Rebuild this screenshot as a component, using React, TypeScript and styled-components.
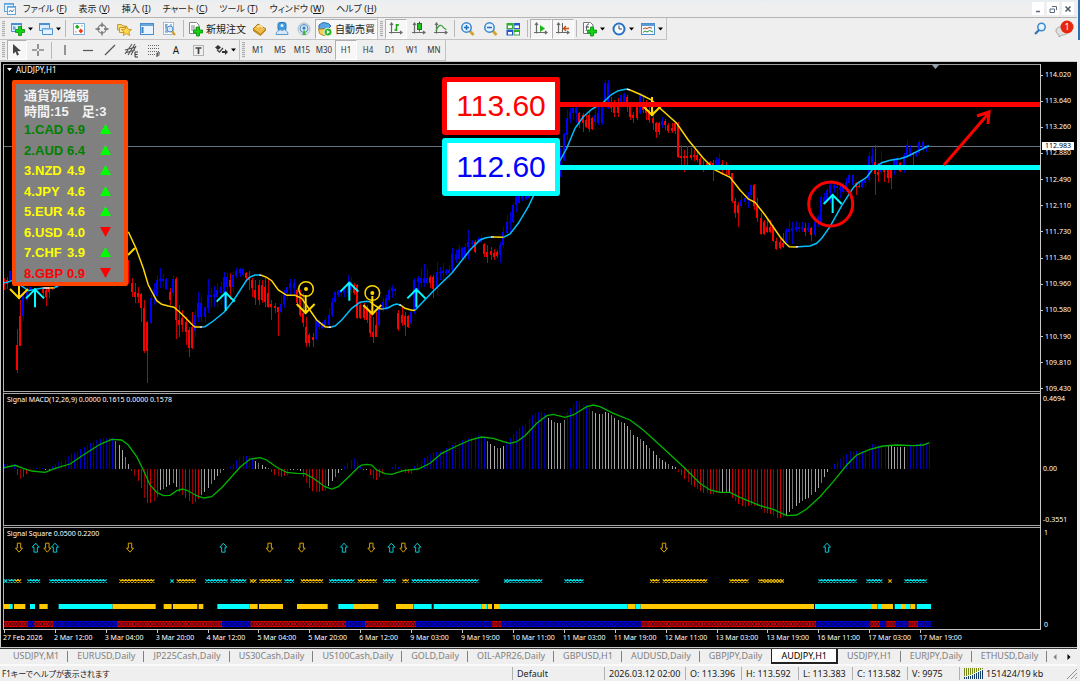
import React from 'react';
import styled, { createGlobalStyle, css } from 'styled-components';

const Global = createGlobalStyle`
  *, *::before, *::after { box-sizing: border-box; }
  body {
    margin: 0;
    background: #efefef;
    color: #1a1a1a;
    font-family: "Noto Sans", "Noto Sans CJK JP", sans-serif;
    font-size: 10px;
    line-height: 12px;
  }
  button, a { font: inherit; color: inherit; text-decoration: none; }
`;

const RED = '#ff0000';
const BLUE = '#0000ff';
const AQUA = '#00ffff';
const GOLD = '#ffd700';

/* ---------- data ---------- */

// Samples are stored in thirds of a pixel. Candles: colour, high, body top, body bottom, low.
const candleRuns: [number, string][] = [
  [12, 'r655 662 675 690;r650 660 672 688;b632 632 660 660'],
  [51, 'r808 855 930 938;r720 768 857 857;b700 705 768 783;b680 690 720 725;b680 682 692 694'],
  [128, 'r680 682 700 715;r680 690 710 738;r680 682 697 714;r680 680 688 690'],
  [385, 'r600 600 670 672;r655 670 697 712;r668 697 712 728;r680 700 712 730;r700 703 743 785;r720 743 873 880;r783 785 873 970;b705 714 790 792;b670 690 710 735;b645 660 707 715;b625 657 662 685;b643 657 662 680;b655 657 688 690;r685 695 720 735;b645 657 700 707;r650 657 780 838;r735 780 795 830;r750 775 795 815;r770 785 815 855;r800 810 865 890;r755 800 865 868;b750 765 812 830;b697 730 770 785;b712 730 772 785;b740 742 772 790;b658 705 745 760;b685 705 712 740;b678 703 712 742;b670 690 710 740;b665 682 700 735;b635 650 700 745;b640 650 680 700;r640 660 680 720;b635 645 680 700;b625 632 648 655;b625 628 640 650;b625 628 645 650;r635 640 655 665;r632 650 660 690;r655 660 685 710;r660 690 715 735;r660 675 720 735;r660 675 720 730;r655 682 725 740;r655 700 740 745'],
  [814, 'r720 733 740 780;r730 738 745 760;r740 742 757 827;b705 733 757 762;b690 702 733 745;b680 682 700 720;b657 668 685 705;b657 668 685 705;r685 690 730 740;r690 700 765 770;r700 760 790 800;r770 800 850 860;r820 825 850 860;r820 830 840 860;b775 780 838 840;b780 785 800 810;b785 790 805 808;b770 780 800 805;b745 765 795 800;b715 725 765 770;b694 697 725 730;b690 693 706 710;b690 693 700 710;b685 690 700 710;b645 665 700 710;b650 665 690 700;r670 675 700 705;r672 675 775 778;r730 735 775 778;r730 735 775 780;r735 740 780 790;r750 755 820 830;r770 815 832 850;r755 795 830 832;b735 745 795 800;b715 725 750 755;b705 715 748 750;b680 690 720 725;b675 685 692 715;b683 687 692 705;r750 760 808 812;r740 765 790 798;r755 768 795 827;r765 768 800 805;b750 755 790 795;b655 660 755 762;b648 655 665 700;b625 653 670 680;b612 653 670 680;b628 655 670 675;r645 650 670 685;r645 650 688 715;b605 637 680 705;b620 635 640 660;b608 633 640 660;b628 633 640 645;b615 630 640 660;b563 583 630 640;b570 583 600 610;b555 567 597 605;b560 565 595 600;b550 560 590 600;b510 547 560 600;b540 547 553 560;r540 545 575 580;b530 537 545 550;b525 535 545 550;r548 553 583 590;r555 575 590 610;r560 572 585 600;r567 580 590 600;r570 575 587 595;b545 555 585 610;b500 515 555 565;b465 487 520 535;b455 485 490 515;b428 435 487 490;b405 410 435 455;b400 405 430 432;b395 400 418 422;b390 400 418 420;b380 390 415 418'],
  [1681, 'b265 270 350 350;b218 222 300 302;b150 175 225 240;b145 155 178 190;b140 143 160 180;b140 143 160 190;r155 160 185 205;r160 165 190 215;r165 180 200 205;r150 165 208 215;r170 175 208 210;b150 165 185 195;b140 160 190 195;b130 140 190 195;b60 68 140 145;b60 68 145 148;r110 125 145 155;r120 140 158 170;r115 140 160 172;b102 105 140 145;b100 103 125 130;r105 110 140 155;r130 140 170 180;r155 165 175 188;r130 140 175 180;b103 105 160 162;r110 125 150 160;r120 130 160 180;r140 150 180 190;r150 175 190 210;r185 190 215 235;r185 190 215 225;b172 182 195 205;r178 183 195 210;r190 195 212 218;r190 205 213 220;r185 190 213 223;r185 195 292 295;r255 288 293 315;r270 287 293 335;r258 287 293 320;r265 285 293 300;r270 285 290 302;r275 285 300 305;r290 298 315 320;r300 315 325 335;r305 310 320 325;r302 305 325 330;r300 310 330 362;b290 300 315 320;b280 298 315 320;r300 312 330 345;r305 315 330 345;r315 325 345 350;r338 340 422 430;r415 422 460 475;r425 435 460 500;b405 420 437 445;b405 415 425 435;b395 405 420 445;b372 375 405 415;r372 375 437 450;r415 437 475 485;r460 475 522 525;r480 485 522 525;r475 500 515 520;r480 500 515 520;r495 500 542 545;r535 542 568 570;r535 545 565 568;r520 550 560 565;b505 510 550 552;b480 508 515 540;b485 503 513 553;b483 500 510 515;b490 500 508 515;b485 500 508 515;r490 505 515 528;b490 505 510 515'],
  [2434, 'r500 505 525 542;b480 485 525 530;b465 470 490 500;b405 410 485 490;b400 410 425 430;b385 390 420 425;b370 375 400 430;b370 375 385 400;b360 378 385 410;b375 380 390 415;b370 380 395 400;b355 365 385 395;b340 345 370 375;b343 345 375 385;r365 370 380 405;r365 378 382 385;b360 365 380 385;b350 360 370 380;b275 288 360 365;b265 288 310 330;r255 305 342 405;r310 335 345 365;b272 310 335 345;r320 325 335 365;r325 330 355 370;r325 330 355 387;b295 300 330 345;b288 295 320 325;r305 310 332 335;b280 285 330 340;b240 255 290 295;b255 265 285 290;r275 278 285 315;b275 280 288 290;b240 245 280 285;b240 245 270 275;b255 260 265 275'],
];

const averageRuns: [string, string][] = [
  ['#00bfff', '12,668 22,667 40,660 85,692 110,687 130,684'],
  ['#fff', '130,684 148,684'],
  [GOLD, '148,684 165,683'],
  ['#00bfff', '160,684 175,678'],
  [GOLD, '385,515 408,565 430,625 445,675 470,722 485,733 505,738 522,742 545,762 575,793 585,801 600,801'],
  ['#00bfff', '607,801 615,800 640,783 672,757 700,722 740,660 752,650 765,645 778,645'],
  [GOLD, '784,646 800,652 815,662 835,690 860,706 885,706 905,715 925,743 950,780 975,800 985,802'],
  ['#00bfff', '994,801 1005,798 1025,780 1055,745 1080,727 1100,724 1110,725'],
  [GOLD, '1110,725 1120,733 1140,746 1148,747'],
  ['#00bfff', '1148,747 1165,743 1180,735 1190,732 1198,734'],
  [GOLD, '1203,736 1215,745 1235,751 1245,751'],
  ['#00bfff', '1245,751 1300,693 1355,640 1410,570 1440,540 1455,534 1472,531'],
  [GOLD, '1482,531 1510,532'],
  ['#00bfff', '1510,532 1530,522 1555,490 1585,440 1602,404 1640,345 1681,300 1700,265 1725,205 1750,170 1775,148 1810,127 1835,103 1855,92 1880,87'],
  [GOLD, '1890,90 1920,103 1955,120 1980,145 2030,190 2065,240 2110,295 2145,330 2190,352 2220,390 2245,417 2265,427 2295,465 2340,530 2355,548 2368,560 2386,561'],
  ['#00bfff', '2395,560 2430,558 2450,550 2465,535 2490,500 2525,437 2560,383 2575,368 2600,352 2620,325 2645,308 2670,301 2700,296 2720,290 2750,275 2770,265 2787,257'],
];

const averageTurns = '600,801 607,801;778,645 784,646;985,802 994,801;1198,734 1203,736;1472,531 1482,531;1880,87 1890,90;2386,561 2395,560';

// MACD histogram: colour and its outline as x:value anchors.
const macdRuns: [string, string][] = [
  ['b', '12:222 40:219 46:228'],
  ['r', '50:255 60:267 72:260 82:250 90:240'],
  ['b', '100:235 120:231 130:235'],
  ['g', '135:237 145:240'],
  ['b', '155:228 175:215 195:210 205:197 235:182 260:165 280:155 300:146 338:143'],
  ['g', '345:152 360:170 380:210 387:228'],
  ['r', '393:242 405:262 415:275 425:300 433:328 445:342 460:333 472:318'],
  ['g', '478:302 500:290 517:278 530:293'],
  ['r', '536:305 550:318 575:342 590:333 599:320'],
  ['g', '604:315 625:292 650:258 672:240'],
  ['b', '680:233 700:220 712:205 725:198 748:197 760:208'],
  ['g', '766:213 780:222 800:235'],
  ['r', '805:240 820:252 838:262 858:255'],
  ['g', '865:238 903:243'],
  ['r', '908:260 925:292 940:307 979:302'],
  ['g', '984:290 1000:265 1015:247 1028:238'],
  ['b', '1033:228 1050:210 1062:205 1083:230'],
  ['g', '1090:236 1098:238'],
  ['r', '1105:250 1120:268 1130:270 1142:258 1152:245'],
  ['b', '1174:231 1185:222 1198:234'],
  ['r', '1207:246 1230:252 1238:250'],
  ['b', '1243:228 1255:215 1275:200 1295:190 1330:178 1350:168 1375:152 1410:142 1435:136 1449:143'],
  ['g', '1453:148 1470:160 1490:175 1505:172 1514:165'],
  ['b', '1519:155 1550:120 1570:105 1595:75 1620:62 1638:72'],
  ['g', '1641:82 1655:92 1675:102 1685:95 1695:85'],
  ['b', '1699:68 1720:40 1730:33 1750:42 1765:50'],
  ['g', '1767:55 1785:68 1800:75 1815:65 1830:72 1850:90 1870:98 1885:110 1900:135 1930:155 1960:185 1970:200 1985:210 2005:222 2028:234'],
  ['r', '2034:245 2050:262 2065:280 2085:292 2110:308 2140:312 2162:308'],
  ['g', '2164:305 2190:305'],
  ['r', '2193:320 2215:343 2235:352 2250:343 2275:350 2290:368 2310:372 2325:383 2340:385 2352:380'],
  ['g', '2357:375 2375:358 2395:340 2430:320 2450:300 2465:275 2484:242'],
  ['b', '2489:233 2505:220 2520:205 2550:183 2590:183 2605:168 2615:163 2658:165'],
  ['g', '2661:168 2712:172'],
  ['b', '2715:168 2760:160 2790:160'],
];

const macdSignal =
  '12,233 45,226 70,235 95,243 135,247 165,235 210,222 250,195 300,163 335,148 365,150 385,165 410,200 430,240 450,285 470,307 490,317 510,316 530,302 548,297 565,303 590,317 612,324 635,320 665,293 720,232 750,207 780,203 800,210 830,232 860,247 890,250 915,251 940,265 975,290 995,297 1015,290 1045,262 1075,232 1085,225 1100,223 1115,225 1130,240 1155,251 1175,253 1210,242 1255,237 1290,220 1325,190 1370,168 1410,150 1445,141 1480,145 1510,155 1530,160 1550,155 1575,137 1610,100 1640,77 1660,73 1695,82 1720,75 1760,50 1780,45 1800,50 1840,70 1890,90 1930,120 1990,175 2050,230 2100,280 2130,300 2160,307 2190,307 2220,322 2280,347 2320,358 2360,377 2390,375 2420,357 2460,320 2500,275 2540,225 2570,195 2610,178 2650,168 2690,165 2740,167 2770,165 2788,158';

const crossRuns: [string, number, number][] = [
  ['a', 12, 16], ['a', 25, 42], ['y', 44, 64], ['a', 82, 120], ['a', 148, 320], ['y', 358, 465], ['a', 511, 520],
  ['y', 530, 588], ['a', 616, 683], ['a', 691, 740], ['y', 750, 770], ['y', 778, 846], ['a', 853, 884], ['y', 902, 970],
  ['a', 987, 1065], ['y', 1073, 1132], ['a', 1149, 1188], ['y', 1207, 1227], ['a', 1235, 1437], ['a', 1512, 1628],
  ['a', 1693, 1752], ['y', 1950, 1980], ['y', 1988, 2124], ['y', 2188, 2247], ['y', 2275, 2352], ['a', 2455, 2571],
  ['a', 2599, 2647], ['y', 2665, 2676], ['a', 2713, 2780],
];

const bandRuns: [string, number, number][] = [
  ['y', 12, 30], ['a', 30, 38], ['y', 42, 76], ['a', 90, 105], ['y', 118, 143], ['a', 176, 338], ['y', 338, 467],
  ['y', 491, 515], ['y', 519, 592], ['y', 596, 610], ['a', 652, 748], ['y', 748, 773], ['y', 777, 849], ['y', 891, 983],
  ['a', 1015, 1062], ['y', 1062, 1135], ['y', 1188, 1240], ['a', 1241, 1295], ['a', 1301, 1444], ['y', 1444, 1458],
  ['a', 1458, 1463], ['y', 1464, 1476], ['y', 1482, 1497], ['a', 1497, 1883], ['y', 1883, 1907], ['a', 1908, 1922],
  ['y', 1922, 2442], ['a', 2445, 2616], ['y', 2616, 2631], ['a', 2632, 2646], ['y', 2646, 2679], ['a', 2684, 2703],
  ['y', 2703, 2718], ['a', 2718, 2731], ['y', 2731, 2746], ['a', 2750, 2793],
];

const trendReds: [number, number][] = [
  [10, 80], [106, 158], [354, 663], [754, 1035], [1098, 1244], [1479, 1503], [1928, 2448], [2613, 2637], [2661, 2685], [2728, 2752],
];

const strengths = [
  ['1.', 'CAD', '6.9', '#008000', 'up'],
  ['2.', 'AUD', '6.4', '#008000', 'up'],
  ['3.', 'NZD', '4.9', '#ffff00', 'up'],
  ['4.', 'JPY', '4.6', '#ffff00', 'up'],
  ['5.', 'EUR', '4.6', '#ffff00', 'up'],
  ['6.', 'USD', '4.0', '#ffff00', 'down'],
  ['7.', 'CHF', '3.9', '#ffff00', 'up'],
  ['8.', 'GBP', '0.9', '#ff0000', 'down'],
];

const prices = ['114.020', '113.640', '113.260', '112.880', '112.490', '112.110', '111.730', '111.340', '110.960', '110.580', '110.190', '109.810', '109.430'];

const times = [
  '27 Feb 2026', '2 Mar 12:00', '3 Mar 04:00', '3 Mar 20:00', '4 Mar 12:00', '5 Mar 04:00', '5 Mar 20:00', '6 Mar 12:00',
  '9 Mar 03:00', '9 Mar 19:00', '10 Mar 11:00', '11 Mar 03:00', '11 Mar 19:00', '12 Mar 11:00', '13 Mar 03:00', '13 Mar 19:00',
  '16 Mar 11:00', '17 Mar 03:00', '17 Mar 19:00',
];

const charts = [
  'USDJPY,M1', 'EURUSD,Daily', 'JP225Cash,Daily', 'US30Cash,Daily', 'US100Cash,Daily', 'GOLD,Daily', 'OIL-APR26,Daily',
  'GBPUSD,H1', 'AUDUSD,Daily', 'GBPJPY,Daily', 'AUDJPY,H1', 'USDJPY,H1', 'EURJPY,Daily', 'ETHUSD,Daily',
];

const menus = [['ファイル', 'F'], ['表示', 'V'], ['挿入', 'I'], ['チャート', 'C'], ['ツール', 'T'], ['ウィンドウ', 'W'], ['ヘルプ', 'H']];

/* ---------- layout ---------- */

const Shell = styled.div`
  display: flex;
  flex-direction: column;
  min-height: 100vh;
  padding-right: 3px;
  overflow: hidden;
  background: linear-gradient(#2f6fb5, #2f6fb5) right top / 2px 40px no-repeat, #efefef;
`;

const MenuBar = styled.header`
  display: flex;
  align-items: center;
  height: 18px;
  padding: 0 3px;
  border-bottom: 1px solid #b4b4b4;
  background: linear-gradient(#e8eef4, #efefef 3px);
`;

const MenuNav = styled.nav`
  display: flex;
  flex: 1;
  gap: 12px;
  margin-left: 6px;
`;

const MenuButton = styled.button`
  padding: 0;
  border: 0;
  background: none;
  font-size: 9px;
  font-feature-settings: "palt";
  white-space: nowrap;
`;

const Underlined = styled.span`
  text-decoration: underline;
`;

const WindowControls = styled.div`
  display: flex;
  gap: 3px;
`;

const WindowButton = styled.button`
  display: grid;
  place-items: center;
  width: 12px;
  height: 13px;
  padding: 0;
  border: 0;
  background: #fff;
`;

const ToolRow = styled.div`
  display: flex;
  align-items: stretch;
  height: 22px;
  & + & { height: 21px; }
`;

const ToolBar = styled.div`
  display: flex;
  align-items: center;
  padding-left: 2px;
  border: solid #c2c2c2;
  border-width: 0 1px 1px 0;
`;

const Grip = styled.span`
  width: 3px;
  height: 16px;
  margin: 0 2px 0 0;
  background: repeating-linear-gradient(#b0b0b0 0 1px, #e4e4e4 1px 2px);
`;

const Divider = styled.span<{ $before?: number }>`
  width: 1px;
  height: 17px;
  margin: 0 2px 0 ${(p) => p.$before ?? 2}px;
  background: #b8b8b8;
`;

const Tool = styled.button<{ $width?: number; $pressed?: boolean; $small?: boolean }>`
  display: flex;
  align-items: center;
  justify-content: center;
  gap: 2px;
  width: ${(p) => p.$width ?? 22}px;
  height: 20px;
  padding: 0;
  border: 1px solid transparent;
  background: none;
  white-space: nowrap;
  flex: none;
  ${(p) => p.$small && css`font-size: 8px; color: #333;`}
  ${(p) => p.$pressed && css`border-color: #b0b0b0 #fff #fff #b0b0b0; background: #f7f7f7;`}
`;

const Spacer = styled.div`
  flex: 1;
`;

const Corner = styled.div`
  display: flex;
  align-items: center;
  gap: 7px;
  padding-right: 3px;
`;

const IconButton = styled.button`
  display: flex;
  padding: 0;
  border: 0;
  background: none;
`;

const ChartFrame = styled.main`
  display: flex;
  flex: 1;
  flex-direction: column;
  border: solid #c9c9c9;
  border-width: 1px 0 1px 1px;
`;

const ChartWindow = styled.section`
  position: relative;
  display: flex;
  flex: 1;
  flex-direction: column;
  padding: 2px 0 0 2px;
  background: #000;
  color: #fff;
  font-size: 8px;
  line-height: 10px;
`;

const Pane = styled.div<{ $height: number; $grow?: boolean }>`
  display: flex;
  flex: ${(p) => (p.$grow ? 1 : 0)} 0 ${(p) => p.$height}px;
`;

const Plot = styled.div<{ $top?: boolean; $last?: boolean }>`
  position: relative;
  flex: 1;
  min-width: 0;
  overflow: hidden;
  border-left: 1px solid #b4b4b4;
  border-top: ${(p) => (p.$top ? '1px solid #a0a0a0' : '0')};
  border-bottom: ${(p) => (p.$last ? '1px solid #c8c8c8' : '3px double #a8a8a8')};
`;

const Drawing = styled.svg`
  position: absolute;
  inset: 0;
  width: 100%;
  height: 100%;
`;

const PaneTitle = styled.h2<{ $fine?: boolean }>`
  position: absolute;
  top: ${(p) => (p.$fine ? 1 : 0)}px;
  left: 3px;
  display: flex;
  align-items: center;
  gap: 4px;
  margin: 0;
  font-size: ${(p) => (p.$fine ? 7 : 8)}px;
  font-weight: 400;
`;

const Scale = styled.ol`
  position: relative;
  display: flex;
  flex-direction: column;
  justify-content: space-between;
  width: 37px;
  margin: 0;
  padding: 0;
  border-left: 1px solid #c8c8c8;
  list-style: none;
  font-size: 7px;
`;

const PriceScale = styled(Scale)`
  padding-top: 6px;
  li { display: flex; align-items: center; gap: 2px; }
  li::before { content: ""; width: 2px; height: 1px; background: #c8c8c8; }
`;

const MacdScale = styled(Scale)`
  display: grid;
  grid-template-rows: 70px 51px auto;
  padding-left: 2px;
`;

const SquareScale = styled(Scale)`
  padding-left: 3px;
`;

const PriceTag = styled.output`
  position: absolute;
  top: 78px;
  left: 1px;
  width: 32px;
  padding-left: 3px;
  background: #fff;
  color: #000;
  line-height: 8px;
`;

const TimeAxis = styled.ol`
  display: grid;
  grid-template-columns: repeat(19, 1fr);
  width: 967px;
  height: 17px;
  margin: 0;
  padding: 0;
  list-style: none;
  white-space: nowrap;
  font-size: 7px;
  li::before { content: ""; display: block; width: 1px; height: 3px; margin-left: 1px; background: #c8c8c8; }
`;

const StrengthPanel = styled.aside`
  position: absolute;
  top: 15px;
  left: 8px;
  width: 116px;
  height: 206px;
  padding: 4px 9px 0 8px;
  border: 4px solid #ff4500;
  border-radius: 2px;
  background: #808080;
  font-family: "Liberation Sans", "Noto Sans CJK JP", sans-serif;
  font-weight: 700;
  font-size: 13px;
  line-height: 16px;
`;

const StrengthHead = styled.p`
  display: flex;
  gap: 13px;
  margin: 0;
  color: #f2f2f2;
  white-space: nowrap;
`;

const StrengthTable = styled.table`
  width: 100%;
  height: 164px;
  border-collapse: collapse;
  td { padding: 0; }
`;

const StrengthRow = styled.tr<{ $tone: string }>`
  color: ${(p) => p.$tone};
  td:first-child { width: 11px; }
  td:nth-child(2) { width: 32px; }
  td:nth-child(3) { width: 33px; }
`;

const LevelTag = styled.strong<{ $line: string; $ink: string; $top: number }>`
  position: absolute;
  top: ${(p) => p.$top}px;
  left: 438px;
  display: grid;
  place-items: center;
  width: 118px;
  height: 58px;
  border: 5px solid ${(p) => p.$line};
  border-radius: 3px;
  background: #fff;
  color: ${(p) => p.$ink};
  font-family: "Liberation Sans", sans-serif;
  font-size: 30px;
  font-weight: 400;
  line-height: 40px;
`;

const TabStrip = styled.nav`
  display: flex;
  align-items: stretch;
  height: 16px;
  padding-left: 4px;
  border-top: 1px solid #333;
  overflow: hidden;
  font-size: 9px;
`;

const Tab = styled.a<{ $active?: boolean; $divided?: boolean }>`
  position: relative;
  flex: none;
  padding: 1px 9px;
  color: #808080;
  white-space: nowrap;
  ${(p) => p.$divided && css`
    &::after { content: ""; position: absolute; top: 2px; right: 0; width: 1px; height: 11px; background: #808080; }
  `}
  ${(p) => p.$active && css`
    border: solid #222;
    border-width: 0 2px 2px 1px;
    background: #fff;
    color: #000;
  `}
`;

const TabArrows = styled.div`
  display: flex;
  gap: 10px;
  align-items: center;
  margin-left: auto;
  padding-right: 6px;
`;

const StatusBar = styled.footer`
  display: grid;
  grid-template-columns: minmax(0, 1fr) 92px 81px 56px 57px 54px 55px 52px 118px;
  align-items: center;
  height: 17px;
  border-top: 2px solid #fafafa;
  white-space: nowrap;
  font-size: 9px;
`;

const StatusCell = styled.span<{ $plain?: boolean }>`
  display: flex;
  align-items: center;
  gap: 3px;
  height: 13px;
  padding-left: ${(p) => (p.$plain ? 2 : 4)}px;
  border-left: ${(p) => (p.$plain ? 0 : 1)}px solid #b0b0b0;
`;

const StatusHelp = styled(StatusCell)`
  font-size: 8px;
  font-feature-settings: "palt";
`;

const ResizeGrip = styled.span`
  display: flex;
  margin-left: auto;
`;

/* ---------- icons ---------- */

const Svg = ({ children, w = 16, h = 16 }: { children: React.ReactNode; w?: number; h?: number }) => (
  <svg width={w} height={h} viewBox={`0 0 ${w} ${h}`} fill="none" aria-hidden="true">{children}</svg>
);
const Caret = () => <Svg w={5} h={4}><path d="M0 0.5h5L2.5 3.5z" fill="#000" /></Svg>;
const plusPath = 'M9.5 7h3v3h3v3h-3v3h-3v-3h-3v-3h3z';
const Plus = () => <path d={plusPath} fill="#14d214" stroke="#088a08" strokeWidth="0.8" />;

const NewChart = () => (
  <Svg><path d="M1.5 2.5h10v8h-10z" fill="#dcecff" stroke="#4a90d0" /><path d="M1 3h11" stroke="#4a90d0" strokeWidth="2" /><path d="M3 7h3M4 5v4" stroke="#4a90d0" /><g transform="translate(-1 -1.5)"><Plus /></g></Svg>
);
const Profiles = () => (
  <Svg><path d="M1.5 2.5h10v7h-10z" fill="#dcecff" stroke="#4a90d0" /><path d="M1 3h11" stroke="#4a90d0" strokeWidth="2" /><path d="M4.5 7.500h10v6h-10z" fill="#e6f2ff" stroke="#4a90d0" /><path d="M4 8h11" stroke="#7fb4e4" strokeWidth="1.5" /></Svg>
);
const MarketWatch = () => (
  <Svg><rect x="2.500" y="2.500" width="11" height="11" fill="#fff" stroke="#7fb0dc" /><path d="M4 6l2-2.500L8.500 6 6.500 8z" fill="#12b212" /><path d="M7.500 10l2.200-2.500 2.500 2.500-2.200 2.500z" fill="#f03c14" /><path d="M4 10h2v1.500H4zM10 4h2v1.500h-2z" fill="#c8c8c8" /></Svg>
);
const Target = () => (
  <Svg><circle cx="8" cy="8" r="4" stroke="#808080" strokeWidth="1.300" /><path d="M8 1.500v4.500M8 10v4.500M1.500 8H6M10 8h4.500" stroke="#707070" strokeWidth="1.300" /></Svg>
);
const Favorites = () => (
  <Svg><path d="M1.500 3.500h4l1 1.500h3v4h-8z" fill="#f8dc78" stroke="#c89a28" /><path d="M3.500 6.500h7v5h-7z" fill="#fbe89a" stroke="#c89a28" /><path d="M10.500 5l1.500 3.200 3.500.4-2.600 2.300.8 3.600-3.200-1.800-3.200 1.800.8-3.600L5.500 8.600 9 8.200z" fill="#ffd94a" stroke="#c48a14" strokeWidth="0.800" /></Svg>
);
const Navigator = () => (
  <Svg><rect x="1.500" y="2.500" width="13" height="11" fill="#eaf4ff" stroke="#4a8ccc" /><path d="M2 4h12" stroke="#6aa6de" strokeWidth="2" /><path d="M3.500 6v6" stroke="#3f80c0" strokeWidth="2" /></Svg>
);
const Tester = () => (
  <Svg><rect x="2.500" y="1.500" width="10" height="12" fill="#f8fbff" stroke="#a8bccc" /><path d="M4 4h3M9 4h2M4 6h2M4 11h3M5 3v8" stroke="#5890c0" /><circle cx="9" cy="8" r="3" fill="#d0e8fa" stroke="#4a8ccc" /><path d="M11 10.500l3 3.500" stroke="#d09a1c" strokeWidth="2" /></Svg>
);
const NewOrder = () => (
  <Svg><path d="M1.500 1.500h7l2.500 2.500v8.500H1.500z" fill="#fff" stroke="#808890" /><path d="M3 5h4M3 7h6M3 9h5" stroke="#7f8790" /><g transform="translate(-1 -1)"><Plus /></g></Svg>
);
const MetaEditor = () => (
  <Svg><path d="M2 8l5-5 8 5-5.500 5.500z" fill="#eebc48" stroke="#a87410" /><path d="M2 8v2l7.500 5 5.500-5.500V8l-5.500 5z" fill="#c08a1c" /><path d="M6 6l3-1.500 3 2" stroke="#fbe6a8" strokeWidth="1.500" /></Svg>
);
const Community = () => (
  <Svg><rect x="4" y="1.500" width="8" height="8" rx="2" fill="#3f9ae0" stroke="#2878b8" /><circle cx="8" cy="4.500" r="1.500" fill="#dff0ff" /><path d="M2 13c0-3 3-3 4-4.500 1.500 1 3 1 4.500 0C13 10 14 11 14 13.500H2z" fill="#d4e8fa" stroke="#5c98c8" /></Svg>
);
const Signals = () => (
  <Svg><circle cx="8" cy="8" r="6" fill="#dcebf5" stroke="#a8bccc" /><circle cx="8" cy="7.500" r="3.800" stroke="#6a98c4" strokeWidth="1.300" /><path d="M8 7.500L6.500 14h3.500z" fill="#3cb83c" /><circle cx="8" cy="7" r="1.600" fill="#3a78c0" /></Svg>
);
const AutoTrade = () => (
  <Svg><path d="M2 8h9l3-3-2.500-2.500L6 1.500 2 4z" fill="#58a8e8" stroke="#2a6cac" /><path d="M1.500 8h10l2 5-7 1.500-4-2z" fill="#f6d05c" stroke="#b88a1c" /><circle cx="11" cy="11" r="4" fill="#28b428" stroke="#fff" strokeWidth="0.800" /><path d="M9.800 9v4l3.300-2z" fill="#fff" /></Svg>
);
const Axes = () => <path d="M3.500 1.500v11M1 11.500h13M2 4l1.500-2L5 4M12 10l2 1.500-2 1.500" stroke="#6a6a6a" strokeWidth="1.200" />;
const BarsIcon = () => <Svg><Axes /><path d="M8.500 3v7M8.500 9H6.500M8.500 4H11" stroke="#18a018" strokeWidth="1.500" /></Svg>;
const CandleIcon = () => <Svg><Axes /><path d="M8.500 0.500v10" stroke="#108010" /><rect x="6.500" y="2.500" width="4" height="6" fill="#1cc41c" stroke="#108010" /></Svg>;
const LineIcon = () => <Svg><Axes /><path d="M3 10c2-6 5-7 7-4 1 1.500 2 2 3.500 2.500" stroke="#38a038" strokeWidth="1.200" /></Svg>;
const Zoom = ({ plus }: { plus?: boolean }) => (
  <Svg><path d="M9.500 9.500l4 4.500" stroke="#d4a42c" strokeWidth="2.800" /><circle cx="6.500" cy="6.500" r="4.700" fill="#e4f2ff" stroke="#3a84c8" strokeWidth="1.500" /><path d={plus ? 'M4 6.500h5M6.500 4v5' : 'M4 6.500h5'} stroke="#2070b8" strokeWidth="1.500" /></Svg>
);
const Tile = () => (
  <Svg><path d="M1.500 2H8v6H1.500zM8.500 8.500H15v6H8.500z" fill="#30b030" /><path d="M8.500 2H15v6H8.500zM1.500 8.500H8v6H1.500z" fill="#2858c8" /><path d="M3 4.500h4V7H3zM9.500 4.500H14V7H9.500zM3 11h4v2.500H3zM9.500 11H14v2.500H9.500z" fill="#fff" /></Svg>
);
const ScrollIcon = () => <Svg><Axes /><path d="M7 4l5 3.500L7 11z" fill="#1cb41c" /></Svg>;
const ShiftIcon = () => <Svg><Axes /><path d="M7.500 2v9" stroke="#606060" /><path d="M14 7.500H9M11 5l-2.500 2.500L11 10" stroke="#d04810" strokeWidth="1.300" /></Svg>;
const Indicators = () => (
  <Svg><path d="M1.500 1.500h7l2.500 2.500v8.500H1.500z" fill="#fff" stroke="#707880" /><path d="M7 3c-3-1-2 6-3 7M3.500 6H7" stroke="#404850" /><g transform="translate(-1 -1)"><Plus /></g></Svg>
);
const Clock = () => <Svg><circle cx="8" cy="8" r="5.500" fill="#f4faff" stroke="#2a70c0" strokeWidth="2" /><path d="M8 4.500V8h3" stroke="#404850" /></Svg>;
const Template = () => (
  <Svg><rect x="1.500" y="2.500" width="13" height="11" fill="#f4faff" stroke="#4a8ccc" /><path d="M2 4h12" stroke="#5a9ad8" strokeWidth="2" /><path d="M3 8l2-1 2 .5L9 6.500l3 .5" stroke="#b04820" /><path d="M3 11.500l2-1.500 2 1 2.500-1.500L13 11" stroke="#309030" /></Svg>
);
const Cursor = () => <Svg><path d="M4 2v10l2.500-2.300L8 13.500l2-.8-1.600-3.500L12 9z" fill="#444" /></Svg>;
const Cross = () => <Svg><path d="M8 2v5M8 9v5M2 8h5M9 8h5" stroke="#555" strokeWidth="1.200" /></Svg>;
const Stroke = ({ d }: { d: string }) => <Svg><path d={d} stroke="#555" strokeWidth="1.200" /></Svg>;
const Channel = () => (
  <Svg><path d="M1 12L8 2M4 13L11 2M1 8l11-3M1 11l10-3M7 13l5-9" stroke="#555" strokeWidth="1.100" /><path d="M14 10h-3v5h3M11 12.500h2.500" stroke="#333" /></Svg>
);
const Fibo = () => (
  <Svg><path d="M2 3.500h12M2 6.500h12M2 9.500h12M2 12.500h7" stroke="#666" strokeDasharray="1 1" /><path d="M14 11h-3v4M11 13h2.500" stroke="#333" /></Svg>
);
const LabelBox = () => (
  <Svg><rect x="3.500" y="3.500" width="10" height="10" stroke="#777" strokeDasharray="1 1" /><path d="M5.500 6h6M8.500 6v6" stroke="#444" strokeWidth="1.700" /></Svg>
);
const Marks = () => (
  <Svg><path d="M5 3l3 2.500L5 8 2 5.500z" fill="#333" /><path d="M4 8l2.500 2L10 6" stroke="#444" strokeWidth="1.300" /><path d="M12 7l3 3-3 3v-2H9V9h3z" fill="#333" /></Svg>
);
const AppMark = () => (
  <Svg w={14} h={14}><rect x="1.500" y="1.500" width="9" height="8" fill="#e6f2ff" stroke="#5fa4dc" /><rect x="4.500" y="4.500" width="8" height="8" fill="#f4faff" stroke="#5fa4dc" /><path d="M1 2h10M4 5h9" stroke="#5fa4dc" strokeWidth="1.500" /><path d="M6 10l1.500-2L9 10l2-2.500" stroke="#3a80c0" /></Svg>
);

/* ---------- drawings ---------- */

const px = (v: number) => v / 3 - 4;
const priceY = (v: number) => v / 3 - 5;
const macdY = (v: number) => v / 3 - 4;
const squareY = (v: number) => v / 3 - 138;
const BAR = 9.535;

const toPoints = (pts: string, y: (v: number) => number) =>
  pts.split(' ').map((p) => { const [a, b] = p.split(',').map(Number); return `${px(a).toFixed(1)},${y(b).toFixed(1)}`; }).join(' ');

const Candles = () => (
  <g shapeRendering="crispEdges">
    {candleRuns.map(([start, rows]) => rows.split(';').map((row, i) => {
      const [high, top, bottom, low] = row.slice(1).split(' ').map((v) => Math.round(priceY(Number(v))));
      const x = Math.round(px(start + i * BAR));
      const up = row[0] === 'b';
      return (
        <g key={`${start}-${i}`}>
          <rect x={x} y={high} width="1" height={Math.max(1, low - high)} fill={up ? '#0000c8' : '#c80000'} />
          <rect x={x - 1} y={top} width="2" height={Math.max(1, bottom - top)} fill={up ? BLUE : RED} />
        </g>
      );
    }))}
  </g>
);

const UpArrow = ({ x, tip }: { x: number; tip: number }) => {
  const a = px(x), b = priceY(tip);
  return <path d={`M${a} ${b + 19}V${b}M${a - 9} ${b + 10}L${a} ${b + 1}L${a + 9} ${b + 10}`} stroke={AQUA} strokeWidth="2" fill="none" />;
};
const DownArrow = ({ x, tip }: { x: number; tip: number }) => {
  const a = px(x), b = priceY(tip);
  return <path d={`M${a} ${b - 19}V${b}M${a - 9} ${b - 10}L${a} ${b - 1}L${a + 9} ${b - 10}`} stroke={GOLD} strokeWidth="2" fill="none" />;
};
const Ring = ({ x, y }: { x: number; y: number }) => (
  <g><circle cx={px(x)} cy={priceY(y)} r="7.300" stroke={GOLD} strokeWidth="1.500" fill="none" /><circle cx={px(x)} cy={priceY(y)} r="2" fill={GOLD} /></g>
);

const PriceDrawing = () => (
  <Drawing role="img" aria-label="AUDJPY H1">
    <rect y="81" width="100%" height="1" fill="#64727f" />
    <Candles />
    {averageRuns.map(([color, pts]) => (
      <polyline key={pts} points={toPoints(pts, priceY)} stroke={color} strokeWidth="1.500" fill="none" />
    ))}
    {averageTurns.split(';').map((pts) => (
      <polyline key={pts} points={toPoints(pts, priceY)} stroke="#fff" strokeWidth="1.500" fill="none" />
    ))}
    {[[105, 685], [677, 695], [1048, 665], [1249, 685]].map(([x, t]) => <UpArrow key={x} x={x} tip={t} />)}
    <path d="M124 190l7-7" stroke={GOLD} strokeWidth="2" />
    {[[57, 717], [917, 762], [1117, 765], [1956, 168]].map(([x, t]) => <DownArrow key={x} x={x} tip={t} />)}
    <Ring x={918} y={687} />
    <Ring x={1117} y={699} />
    <rect x="550" y="37" width="100%" height="5" fill={RED} />
    <rect x="550" y="100" width="100%" height="5" fill={AQUA} />
    <UpArrow x={2498} tip={402} />
    <circle cx="826.700" cy="139" r="22" stroke={RED} strokeWidth="3" fill="none" />
    <path d="M940 100L984 49M973 51L985 47L984 59" stroke={RED} strokeWidth="3" fill="none" />
    <path d="M928 0h7l-3.500 4z" fill="#8fa2b2" />
  </Drawing>
);

const tones: Record<string, string[]> = { b: ['#0000c8', '#000096'], r: ['#c80000', '#960000'], g: ['#a8a8a8', '#787878'] };

const macdBars = (() => {
  const bars: { x: number; y: number; tone: string }[] = [];
  const runs = macdRuns.map(([tone, list]) => ({ tone, pts: list.split(' ').map((p) => p.split(':').map(Number)) }));
  for (let i = 0; i < 292; i++) {
    const at = 12.500 + i * BAR;
    const run = runs.find((r) => at >= r.pts[0][0] - 4 && at <= r.pts[r.pts.length - 1][0] + 4);
    if (!run) continue;
    const p = run.pts;
    let k = 0;
    while (k < p.length - 2 && at > p[k + 1][0]) k++;
    const t = Math.min(1, Math.max(0, (at - p[k][0]) / (p[k + 1][0] - p[k][0])));
    bars.push({ x: Math.round(px(at)), y: Math.round(macdY(p[k][1] + t * (p[k + 1][1] - p[k][1]))), tone: tones[run.tone][i % 3 === 2 ? 1 : 0] });
  }
  return bars;
})();

const MacdDrawing = () => (
  <Drawing role="img" aria-label="MACD">
    <g shapeRendering="crispEdges">
      {macdBars.map((b) => <rect key={b.x} x={b.x} y={Math.min(b.y, 75)} width="1" height={Math.max(1, Math.abs(b.y - 75))} fill={b.tone} />)}
    </g>
    <polyline points={toPoints(macdSignal, macdY)} stroke="#00b400" strokeWidth="1.300" fill="none" />
  </Drawing>
);

const marks = (from: number, to: number) => Array.from({ length: Math.max(1, Math.round((to - from) / BAR)) }, (_, i) => from + 5 + i * BAR);
const hollow = (x: number, up: boolean) => {
  const a = px(x), c = squareY(473), s = up ? 1 : -1;
  return `M${a} ${c - 4.500 * s}l3.500 ${4 * s}h-1.800v${5 * s}h-3.400v${-5 * s}h-1.800z`;
};

const SquareDrawing = () => (
  <Drawing role="img" aria-label="Signal Square">
    {[57, 142, 390, 809, 905, 1114, 1210, 1992].map((x) => <path key={x} d={hollow(x, false)} stroke="#d8a400" fill="none" />)}
    {[107, 165, 670, 1032, 1174, 1252, 2481].map((x) => <path key={x} d={hollow(x, true)} stroke="#00c8d0" fill="none" />)}
    {crossRuns.map(([c, a, b]) => (
      <path key={a} d={marks(a, b).map((m) => `M${(px(m) - 1.600).toFixed(1)} 51.400l3.200 3.200m0 -3.200l-3.200 3.200`).join('')} stroke={c === 'a' ? '#00d8e0' : '#e8b800'} strokeWidth="1.200" />
    ))}
    {bandRuns.map(([c, a, b]) => <rect key={a} x={px(a)} y="76" width={(b - a) / 3} height="5" fill={c === 'a' ? AQUA : '#ffc800'} />)}
    {Array.from({ length: 292 }, (_, i) => {
      const at = 13 + i * BAR;
      const red = trendReds.some(([a, b]) => at >= a && at <= b);
      return (
        <g key={i}>
          <rect x={px(at) - 1.600} y="93" width="3.200" height="6" fill={red ? '#780000' : '#000078'} />
          <path d={`M${px(at) - 1.600} 93.500h3.200M${px(at) - 1.600} 98.500h3.200`} stroke={red ? '#d80000' : '#0000d8'} />
          <circle cx={px(at)} cy="96" r="1.300" stroke={red ? '#f00000' : '#0000f0'} strokeWidth="0.800" fill="#000030" />
        </g>
      );
    })}
  </Drawing>
);

/* ---------- page ---------- */

export default function App() {
  return (
    <Shell>
      <Global />
      <MenuBar>
        <AppMark />
        <MenuNav aria-label="メニュー">
          {menus.map(([name, key]) => (
            <MenuButton key={key} type="button">{name} (<Underlined>{key}</Underlined>)</MenuButton>
          ))}
        </MenuNav>
        <WindowControls>
          <WindowButton type="button" aria-label="最小化"><Svg w={10} h={10}><path d="M3 7.500h4" stroke="#5a6a7a" strokeWidth="1.500" /></Svg></WindowButton>
          <WindowButton type="button" aria-label="元に戻す"><Svg w={10} h={10}><path d="M4 2.500h4.500v3.500M2 5h4.500v3.500H2z" stroke="#5a6a7a" /></Svg></WindowButton>
          <WindowButton type="button" aria-label="閉じる"><Svg w={10} h={10}><path d="M2.500 2.500l5 5M7.500 2.500l-5 5" stroke="#4a5a6a" strokeWidth="1.500" /></Svg></WindowButton>
        </WindowControls>
      </MenuBar>

      <ToolRow>
        <ToolBar role="toolbar" aria-label="標準">
          <Grip />
          <Tool $width={28} aria-label="新規チャート"><NewChart /><Caret /></Tool>
          <Tool $width={28} aria-label="プロファイル"><Profiles /><Caret /></Tool>
          <Divider />
          <Tool aria-label="気配値表示"><MarketWatch /></Tool>
          <Tool $width={23} aria-label="データウィンドウ"><Target /></Tool>
          <Tool aria-label="お気に入り"><Favorites /></Tool>
          <Tool $width={23} aria-label="ナビゲーター"><Navigator /></Tool>
          <Tool aria-label="ストラテジーテスター"><Tester /></Tool>
          <Divider $before={3} />
          <Tool $width={62}><NewOrder />新規注文</Tool>
          <Tool aria-label="エディタ"><MetaEditor /></Tool>
          <Tool $width={23} aria-label="コミュニティ"><Community /></Tool>
          <Tool aria-label="シグナル"><Signals /></Tool>
          <Tool $width={62} $pressed aria-pressed="true"><AutoTrade />自動売買</Tool>
        </ToolBar>
        <ToolBar role="toolbar" aria-label="チャート">
          <Grip />
          <Tool $pressed aria-label="バーチャート"><BarsIcon /></Tool>
          <Tool $width={23} aria-label="ローソク足"><CandleIcon /></Tool>
          <Tool aria-label="ラインチャート"><LineIcon /></Tool>
          <Divider />
          <Tool aria-label="拡大"><Zoom plus /></Tool>
          <Tool $width={23} aria-label="縮小"><Zoom /></Tool>
          <Tool aria-label="整列"><Tile /></Tool>
          <Divider $before={3} />
          <Tool $pressed aria-label="自動スクロール"><ScrollIcon /></Tool>
          <Tool $pressed aria-label="チャートシフト"><ShiftIcon /></Tool>
          <Divider />
          <Tool $width={29} aria-label="インディケータ"><Indicators /><Caret /></Tool>
          <Tool $width={29} aria-label="時間"><Clock /><Caret /></Tool>
          <Tool $width={29} aria-label="定型チャート"><Template /><Caret /></Tool>
        </ToolBar>
        <Spacer />
        <Corner>
          <IconButton type="button" aria-label="検索">
            <Svg><circle cx="9.500" cy="6" r="3.700" fill="#e8f4ff" stroke="#3a88d0" strokeWidth="1.500" /><path d="M7 9l-4 4" stroke="#2a70c0" strokeWidth="2.200" /></Svg>
          </IconButton>
          <IconButton type="button" aria-label="通知 1">
            <Svg w={19} h={18}>
              <path d="M1 11c0-3 3-4.500 6-4.500s6 1.500 6 4.500-3 4-6 4l-3 2v-2.500C2 14 1 12.500 1 11z" fill="#e0e0e0" stroke="#a8a8a8" />
              <circle cx="12" cy="7" r="6.500" fill="#e8280c" />
              <text x="12" y="10" fill="#fff" fontSize="9" textAnchor="middle">1</text>
            </Svg>
          </IconButton>
        </Corner>
      </ToolRow>

      <ToolRow>
        <ToolBar role="toolbar" aria-label="ライン等">
          <Grip />
          <Tool $width={20} $pressed aria-label="カーソル"><Cursor /></Tool>
          <Tool aria-label="クロスヘア"><Cross /></Tool>
          <Divider />
          <Tool aria-label="垂直線"><Stroke d="M8 3v10" /></Tool>
          <Tool $width={23} aria-label="水平線"><Stroke d="M3 8.500h10" /></Tool>
          <Tool aria-label="トレンドライン"><Stroke d="M3 13L13 3" /></Tool>
          <Tool aria-label="チャネル"><Channel /></Tool>
          <Tool aria-label="フィボナッチ"><Fibo /></Tool>
          <Tool>A</Tool>
          <Tool aria-label="ラベル"><LabelBox /></Tool>
          <Tool $width={30} aria-label="矢印"><Marks /><Caret /></Tool>
        </ToolBar>
        <ToolBar role="toolbar" aria-label="時間足">
          <Grip />
          {['M1', 'M5', 'M15', 'M30', 'H1', 'H4', 'D1', 'W1', 'MN'].map((t) => (
            <Tool key={t} $small $pressed={t === 'H1'}>{t}</Tool>
          ))}
        </ToolBar>
      </ToolRow>

      <ChartFrame>
        <ChartWindow>
          <Pane $height={330} $grow>
            <Plot $top>
              <PriceDrawing />
              <PaneTitle><Svg w={5} h={4}><path d="M0 0h5L2.500 3z" fill="#fff" /></Svg>AUDJPY,H1</PaneTitle>
              <StrengthPanel>
                <StrengthHead>通貨別強弱</StrengthHead>
                <StrengthHead><span>時間:15</span><span>足:3</span></StrengthHead>
                <StrengthTable>
                  <tbody>
                    {strengths.map(([rank, name, value, tone, way]) => (
                      <StrengthRow key={name} $tone={tone}>
                        <td>{rank}</td><td>{name}</td><td>{value}</td>
                        <td>
                          <svg width="11" height="10" viewBox="0 0 11 10" role="img" aria-label={way}>
                            <path d={way === 'up' ? 'M0 10h11L5.500 0z' : 'M0 0h11L5.500 10z'} fill={way === 'up' ? '#00ff00' : RED} />
                          </svg>
                        </td>
                      </StrengthRow>
                    ))}
                  </tbody>
                </StrengthTable>
              </StrengthPanel>
              <LevelTag $line={RED} $ink={RED} $top={12}>113.60</LevelTag>
              <LevelTag $line={AQUA} $ink={BLUE} $top={73}>112.60</LevelTag>
            </Plot>
            <PriceScale>
              {prices.map((p) => <li key={p}>{p}</li>)}
              <PriceTag>112.983</PriceTag>
            </PriceScale>
          </Pane>
          <Pane $height={134}>
            <Plot>
              <MacdDrawing />
              <PaneTitle $fine>Signal MACD(12,26,9) 0.0000 0.1615 0.0000 0.1578</PaneTitle>
            </Plot>
            <MacdScale><li>0.4694</li><li>0.00</li><li>-0.3551</li></MacdScale>
          </Pane>
          <Pane $height={102}>
            <Plot $last>
              <SquareDrawing />
              <PaneTitle $fine>Signal Square 0.0500 0.2200</PaneTitle>
            </Plot>
            <SquareScale><li>1</li><li>0</li></SquareScale>
          </Pane>
          <TimeAxis>
            {times.map((t) => <li key={t}>{t}</li>)}
          </TimeAxis>
        </ChartWindow>
      </ChartFrame>

      <TabStrip aria-label="チャート一覧">
        {charts.map((c) => (
          <Tab key={c} href="#" $active={c === 'AUDJPY,H1'} $divided={c !== 'AUDJPY,H1' && c !== 'GBPJPY,Daily'}>{c}</Tab>
        ))}
        <TabArrows>
          <Svg w={4} h={6}><path d="M3.500 0v6L0.500 3z" fill="#808080" /></Svg>
          <Svg w={4} h={6}><path d="M0.500 0v6l3-3z" fill="#000" /></Svg>
        </TabArrows>
      </TabStrip>

      <StatusBar>
        <StatusHelp $plain>F1キーでヘルプが表示されます</StatusHelp>
        <StatusCell>Default</StatusCell>
        <StatusCell>2026.03.12 02:00</StatusCell>
        <StatusCell>O: 113.396</StatusCell>
        <StatusCell>H: 113.592</StatusCell>
        <StatusCell>L: 113.383</StatusCell>
        <StatusCell>C: 113.582</StatusCell>
        <StatusCell>V: 9975</StatusCell>
        <StatusCell>
          <Svg w={19} h={11}>
            <path d="M0.500 0v8M2.500 0v8M4.500 0v7M6.500 0v7M8.500 0v6M10.500 0v5M12.500 0v4M14.500 0v3M16.500 0v2M18.500 0v1" stroke="#7a8a18" />
            <path d="M0.500 9v2M2.500 9v2M4.500 8v3M6.500 8v3M8.500 7v4M10.500 6v5M12.500 5v6M14.500 4v7M16.500 3v8M18.500 2v9" stroke="#123c68" />
          </Svg>
          151424/19 kb
          <ResizeGrip>
            <Svg w={10} h={11}><path d="M0 11L10 1M4 11l6-6M8 11l2-2" stroke="#909090" /></Svg>
          </ResizeGrip>
        </StatusCell>
      </StatusBar>
    </Shell>
  );
}
